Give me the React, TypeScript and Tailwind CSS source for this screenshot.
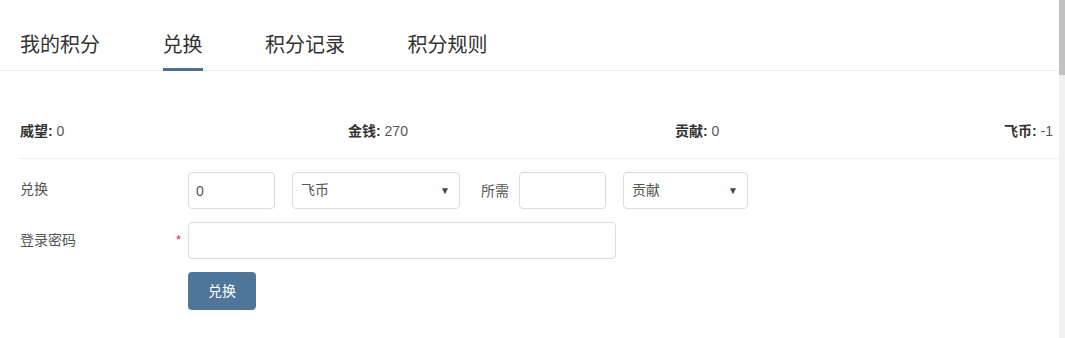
import { useState } from 'react';

const tabs = ['我的积分', '兑换', '积分记录', '积分规则'];

const stats = [
  { label: '威望', value: '0' },
  { label: '金钱', value: '270' },
  { label: '贡献', value: '0' },
  { label: '飞币', value: '-1' },
];

function Select({ value, className }: { value: string; className: string }) {
  return (
    <div
      className={`flex h-[37px] items-center justify-between rounded-[4px] border border-[#dcdcdc] bg-white pl-[8px] pr-[9px] text-[14px] text-[#555] ${className}`}
    >
      <span>{value}</span>
      <span className="text-[10px] text-[#444]">▼</span>
    </div>
  );
}

export default function App() {
  const [active, setActive] = useState(1);
  const [amount, setAmount] = useState('0');

  return (
    <div
      className="flex h-[338px] w-full bg-white text-[#333]"
      style={{ fontFamily: '"Liberation Sans", "Noto Sans CJK SC", sans-serif' }}
    >
      <div className="min-w-0 flex-1">
        {/* tabs */}
        <div className="flex h-[71px] gap-[62.5px] border-b border-[#eeeeee] pl-5">
          {tabs.map((t, i) => (
            <button
              key={t}
              onClick={() => setActive(i)}
              className="relative h-full pt-[19px] text-left text-[20px] leading-[20px] text-[#333]"
            >
              {t}
              {active === i && (
                <span className="absolute bottom-[-1px] left-0 h-[3px] w-full bg-[#4f6f8f]" />
              )}
            </button>
          ))}
        </div>

        {/* stats */}
        <div className="ml-5 mt-[45px] border-b border-[#f0f0f0] pb-[12px]">
          <div className="grid h-[30px] grid-cols-[328px_327px_328px_1fr] items-center text-[14px] text-[#555]">
            {stats.map((s, i) => (
              <div key={s.label} className={i === 3 ? 'pr-[6px] text-right' : ''}>
                <span className="font-bold text-[#333]">{s.label}:</span> {s.value}
              </div>
            ))}
          </div>
        </div>

        {/* form */}
        <div className="mt-[13px] flex flex-col gap-[13px] pl-5 text-[14px] text-[#555]">
          <div className="flex">
            <div className="w-[168px] pt-[7px] leading-[20px]">兑换</div>
            <input
              value={amount}
              onChange={(e) => setAmount(e.target.value)}
              className="h-[37px] w-[87px] rounded-[4px] border border-[#dcdcdc] px-[7px] text-[14px] text-[#555] outline-none"
            />
            <Select value="飞币" className="ml-[17px] w-[168px]" />
            <span className="ml-[21px] self-center leading-[20px]">所需</span>
            <input className="ml-[10px] h-[37px] w-[87px] rounded-[4px] border border-[#dcdcdc] px-[7px] text-[14px] outline-none" />
            <Select value="贡献" className="ml-[17px] w-[125px]" />
          </div>

          <div className="flex">
            <div className="flex w-[168px] justify-between pr-[7px] pt-[8px] leading-[20px]">
              <span>登录密码</span>
              <span className="text-[13px] text-[#e03030]">*</span>
            </div>
            <input
              type="password"
              className="h-[37px] w-[428px] rounded-[4px] border border-[#dcdcdc] px-[7px] outline-none"
            />
          </div>

          <div className="flex pl-[168px]">
            <button className="h-[38px] w-[68px] rounded-[4px] bg-[#4f7599] text-[14px] text-white">
              兑换
            </button>
          </div>
        </div>
      </div>

      {/* scrollbar */}
      <div className="h-full w-[6px] bg-[#f1f1f1]">
        <div className="h-[75px] w-full bg-[#c1c1c1]" />
      </div>
    </div>
  );
}
